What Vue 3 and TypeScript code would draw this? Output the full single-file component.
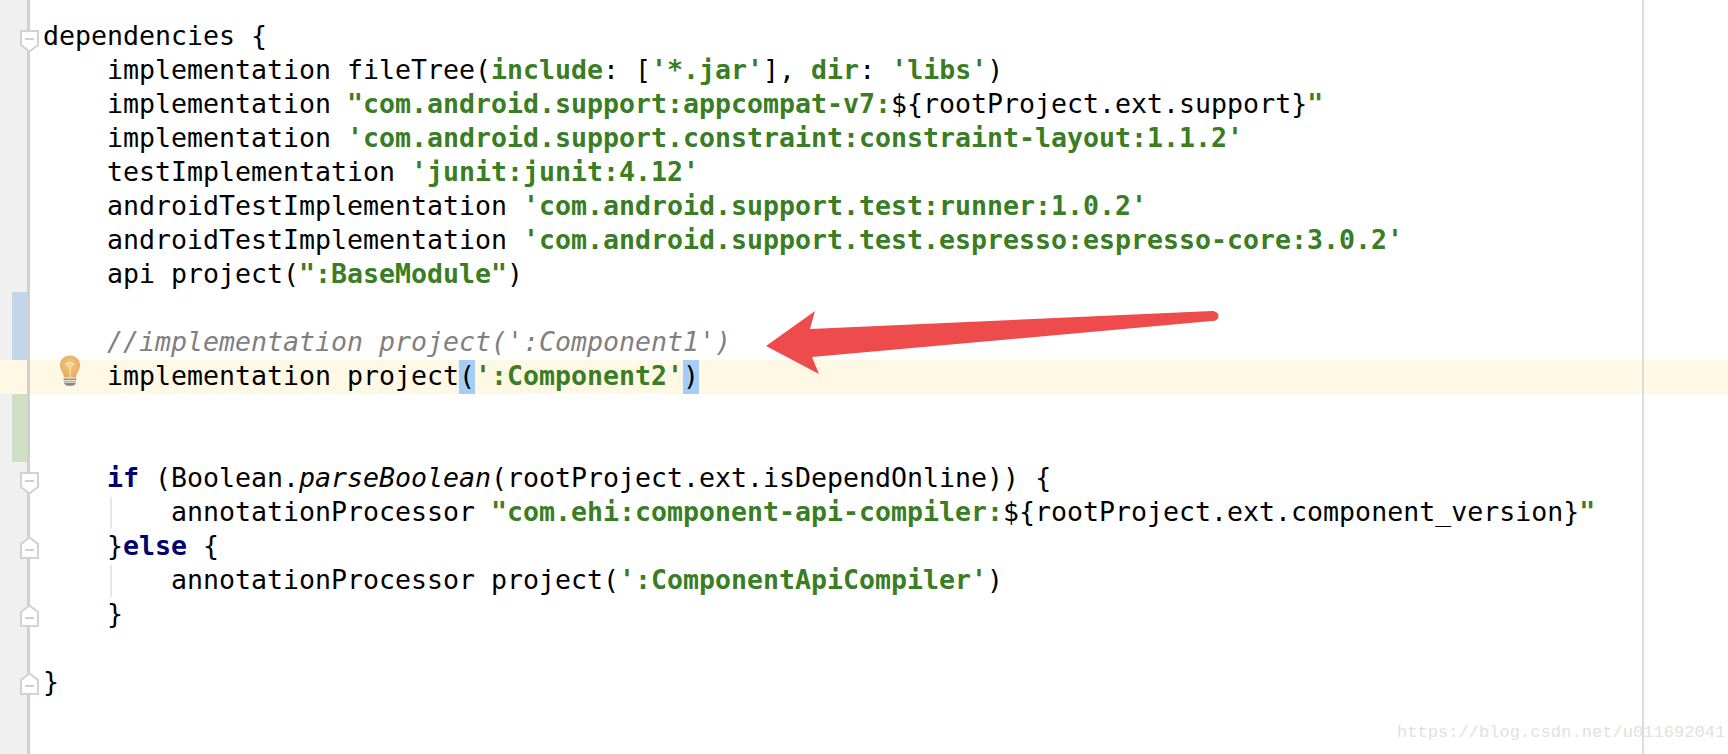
<script setup lang="ts">
type Seg = { t: string; c?: string }
type Row = {
  segs: Seg[]
  mark?: 'blue' | 'green'
  fold?: 'open' | 'close'
  guide?: boolean
  current?: boolean
  bulb?: boolean
}

const s = (t: string): Seg => ({ t, c: 'str' })
const p = (t: string): Seg => ({ t })
const k = (t: string): Seg => ({ t, c: 'kw' })

const rows: Row[] = [
  { segs: [p('dependencies {')], fold: 'open' },
  { segs: [p('    implementation fileTree('), s('include'), p(': ['), s("'*.jar'"), p('], '), s('dir'), p(': '), s("'libs'"), p(')')] },
  { segs: [p('    implementation '), s('"com.android.support:appcompat-v7:'), p('${rootProject.ext.support}'), s('"')] },
  { segs: [p('    implementation '), s("'com.android.support.constraint:constraint-layout:1.1.2'")] },
  { segs: [p('    testImplementation '), s("'junit:junit:4.12'")] },
  { segs: [p('    androidTestImplementation '), s("'com.android.support.test:runner:1.0.2'")] },
  { segs: [p('    androidTestImplementation '), s("'com.android.support.test.espresso:espresso-core:3.0.2'")] },
  { segs: [p('    api project('), s('":BaseModule"'), p(')')] },
  { segs: [], mark: 'blue' },
  { segs: [{ t: "    //implementation project(':Component1')", c: 'cm' }], mark: 'blue' },
  {
    segs: [p('    implementation project'), { t: '(', c: 'match' }, s("':Component2'"), { t: ')', c: 'match' }],
    current: true,
    bulb: true,
  },
  { segs: [], mark: 'green' },
  { segs: [], mark: 'green' },
  { segs: [p('    '), k('if'), p(' (Boolean.'), { t: 'parseBoolean', c: 'it' }, p('(rootProject.ext.isDependOnline)) {')], fold: 'open' },
  { segs: [p('        annotationProcessor '), s('"com.ehi:component-api-compiler:'), p('${rootProject.ext.component_version}'), s('"')], guide: true },
  { segs: [p('    }'), k('else'), p(' {')], fold: 'close' },
  { segs: [p('        annotationProcessor project('), s("':ComponentApiCompiler'"), p(')')], guide: true },
  { segs: [p('    }')], fold: 'close' },
  { segs: [] },
  { segs: [p('}')], fold: 'close' },
]
</script>

<template>
  <div class="editor">
    <div class="row spacer"><div class="gutter"></div></div>

    <div v-for="(row, i) in rows" :key="i" class="row line" :class="{ current: row.current }">
      <div class="gutter">
        <span v-if="row.mark" class="mark" :class="row.mark"></span>
      </div>

      <svg v-if="row.fold === 'open'" class="fold" width="19" height="23" viewBox="0 0 19 23">
        <path d="M1 1H18V15L9.5 21.5L1 15Z" fill="#fff" stroke="#d2d2d2" stroke-width="2" />
        <path d="M5 9H14" stroke="#c4c4c4" stroke-width="1.6" />
      </svg>
      <svg v-else-if="row.fold === 'close'" class="fold closing" width="19" height="23" viewBox="0 0 19 23">
        <path d="M1 22V8L9.5 1.5L18 8V22Z" fill="#fff" stroke="#d2d2d2" stroke-width="2" />
        <path d="M5 14H14" stroke="#c4c4c4" stroke-width="1.6" />
      </svg>

      <svg v-if="row.bulb" class="bulb" width="22" height="31" viewBox="0 0 22 31">
        <defs>
          <radialGradient id="glass" cx="50%" cy="42%" r="58%">
            <stop offset="0%" stop-color="#f3cb88" />
            <stop offset="100%" stop-color="#e6aa5c" />
          </radialGradient>
        </defs>
        <path d="M11 0.5C5 0.5 1 4.8 1 10.2C1 15 4.400 17 5 22.500H17C17.600 17 21 15 21 10.200C21 4.800 17 0.500 11 0.500Z" fill="url(#glass)" />
        <path d="M6.500 8.500L11 12L15.500 8.500M8.500 10A2.500 2.500 0 0 1 13.500 10M11 12V22" fill="none" stroke="#f8e3b6" stroke-width="1.300" />
        <path d="M4.500 23.500H17.500V25.200H4.500Z" fill="#8f8f8f" />
        <path d="M5 26H17V27.500H5Z" fill="#b0b0b0" />
        <path d="M5 28H17C16.500 30 14 30.800 11 30.800C8 30.800 5.500 30 5 28Z" fill="#858585" />
      </svg>

      <div class="code">
        <span v-if="row.guide" class="guide"></span>
        <span v-for="(seg, j) in row.segs" :key="j" :class="seg.c">{{ seg.t }}</span>
      </div>
    </div>

    <div class="row filler"><div class="gutter"></div></div>

    <span class="margin"></span>

    <svg class="arrow" width="470" height="80" viewBox="760 305 470 80">
      <path
        d="M766 346L815 311L810 329L1212 311C1216 311 1218.500 313.500 1218.500 316C1218.500 319 1216 321 1212 321L812 357L819 374Z"
        fill="#ee4c4c"
      />
    </svg>

    <div class="watermark">https://blog.csdn.net/u011692041</div>
  </div>
</template>

<style scoped>
.editor {
  position: relative;
  display: flex;
  flex-direction: column;
  width: 1728px;
  height: 754px;
  overflow: hidden;
  background: #fff;
  font-family: "DejaVu Sans Mono", monospace;
  font-size: 26.58px;
  color: #000;
}

.row {
  position: relative;
  display: flex;
  flex: none;
}

.spacer {
  height: 20px;
}

.filler {
  flex: 1;
}

.line {
  height: 34px;
  line-height: 32px;
}

.current {
  background: #fff8e5;
}

.gutter {
  display: flex;
  flex: none;
  box-sizing: border-box;
  width: 30px;
  background: #f0f0f0;
  border-right: 3px solid #d0d0d0;
}

.current .gutter {
  background: #fff8e5;
}

.mark {
  width: 16px;
  margin-left: 12px;
}

.mark.blue {
  background: #c3d5e8;
}

.mark.green {
  background: #cfdfc5;
}

.fold {
  position: absolute;
  left: 20px;
  top: 10px;
}

.fold.closing {
  top: 6px;
}

.bulb {
  position: absolute;
  left: 59px;
  top: -5px;
}

.code {
  position: relative;
  margin-left: 13px;
  white-space: pre;
}

.guide {
  position: absolute;
  left: 67px;
  top: 1px;
  bottom: 1px;
  width: 2px;
  background: #e6e6e6;
}

.str {
  color: #3a7d23;
  font-weight: 700;
}

.kw {
  color: #000070;
  font-weight: 700;
}

.cm {
  color: #808080;
  font-style: italic;
}

.it {
  font-style: italic;
}

.match {
  background: #a5cdfa;
  display: inline-block;
  height: 34px;
}

.margin {
  position: absolute;
  left: 1642px;
  top: 0;
  bottom: 0;
  width: 2px;
  background: #dcdcdc;
}

.arrow {
  position: absolute;
  left: 760px;
  top: 305px;
}

.watermark {
  position: absolute;
  left: 1397px;
  top: 722px;
  font-family: "Liberation Mono", monospace;
  font-size: 17.100px;
  line-height: 22px;
  color: #e2e2dc;
  white-space: pre;
}
</style>
